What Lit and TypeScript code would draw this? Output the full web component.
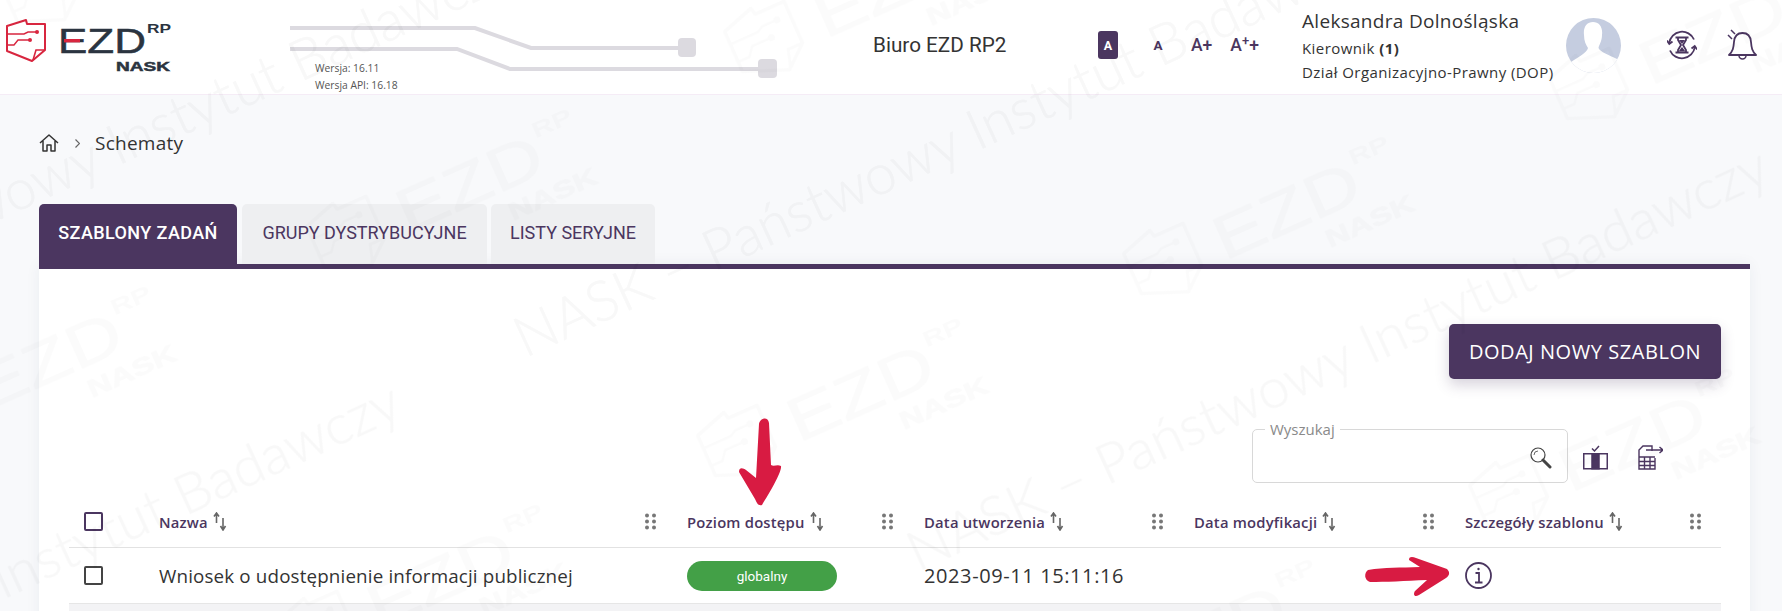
import { LitElement, html, css, svg } from "lit";
import { customElement } from "lit/decorators.js";

const logoIcon = (c: string) => svg`
  <path d="M7 26 L26 20 L27 24 L45 24 L45 50 L32 61 L7 51 Z" fill="none" stroke="${c}" stroke-width="2" stroke-linejoin="round"/>
  <path d="M45 50 L36 50 L33 60" fill="none" stroke="${c}" stroke-width="1.6"/>
  <path d="M7 34 L24 34 L28 32 L37 32 M7 45 L14 45 L18 40 L30 40" fill="none" stroke="${c}" stroke-width="1.4"/>
  <circle cx="37" cy="32" r="2" fill="${c}"/><circle cx="30" cy="40" r="2" fill="${c}"/>`;

const logo = (c: string, r: string) => svg`
  ${logoIcon(r)}
  <text x="58" y="53" font-family="Liberation Sans" font-size="35" textLength="88" lengthAdjust="spacingAndGlyphs" stroke="${c}" stroke-width=".5" fill="${c}">EZD</text>
  <rect x="64" y="39" width="16" height="3.4" fill="${r}"/>
  <text x="147" y="33" font-family="Liberation Sans" font-size="13" font-weight="700" textLength="24" lengthAdjust="spacingAndGlyphs" fill="${c}">RP</text>
  <text x="116" y="71" font-family="Liberation Sans" font-size="13.5" font-weight="700" stroke="${c}" stroke-width=".5" textLength="54" lengthAdjust="spacingAndGlyphs" fill="${c}">NASK</text>`;

const wmLogos: [number, number][] = [
  [-30, -55], [-144, 367], [248, 585], [277, 190], [668, 399], [695, -5], [1094, 217], [1020, 640], [1440, 449], [1520, 42],
];
const wmTexts: [number, number][] = [[525, 358], [918, 572], [-335, 373], [-450, 807]];

@customElement("app-root")
export class AppRoot extends LitElement {
  static styles = css`
    :host { display: block; position: relative; width: 1782px; height: 611px; overflow: hidden; background: #f8f9fb; font-family: "Open Sans", "Noto Sans", sans-serif; color: #333; }
    * { box-sizing: border-box; }
    .din { font-family: Roboto, "Liberation Sans", sans-serif; }
    header { display: flex; height: 95px; background: #fff; border-bottom: 1px solid #f5ecf6; }
    .logo { flex: none; width: 290px; height: 94px; display: block; }
    .lines { flex: none; position: relative; width: 583px; padding: 60px 0 0 25px; font-size: 10.3px; line-height: 17px; color: #555; }
    .lines svg { position: absolute; left: 0; top: 0; }
    .lines div { position: relative; }
    .biuro { flex: none; width: 225px; padding-top: 33px; font-size: 20.7px; line-height: 24px; color: #333; }
    .fonts { flex: none; width: 204px; display: flex; align-items: flex-start; padding-top: 31px; color: #4b3660; }
    .fa { display: flex; align-items: center; justify-content: center; height: 28px; font-weight: 500; }
    .fa.on { width: 20px; background: #4b3660; color: #fff; border-radius: 3px; font-size: 12.5px; font-weight: 700; }
    .fa.s { width: 20px; margin-left: 30px; font-size: 13.5px; font-weight: 700; }
    .fa.m { margin-left: 23px; font-size: 17.5px; }
    .fa.l { margin-left: 18px; font-size: 17.5px; }
    .fa sup { font-size: 13px; line-height: 1; align-self: flex-start; margin-top: 3px; }
    .user { flex: none; width: 264px; padding-top: 8px; }
    .uname { font-size: 19px; letter-spacing: .3px; line-height: 26px; color: #333; margin-bottom: 2px; }
    .urole { font-size: 15px; letter-spacing: .42px; line-height: 24px; color: #333; white-space: nowrap; }
    .urole b { font-weight: 700; }
    .avatar { flex: none; width: 55px; height: 55px; margin-top: 18px; display: block; }
    .ic1 { flex: none; margin: 30px 0 0 46px; display: block; }
    .ic2 { flex: none; margin: 28px 0 0 30px; display: block; }

    .crumbs { display: flex; align-items: center; height: 30px; margin: 33px 0 0 39px; }
    .crumbs .chev { margin: 0 15px 0 16px; display: block; }
    .crumbs span { font-size: 19px; letter-spacing: .25px; color: #333; }

    .tabs { display: flex; gap: 4px; height: 60px; margin: 46px 0 0 39px; }
    .tab { display: flex; align-items: center; justify-content: center; padding-bottom: 3px; font-size: 18px; color: #4b3660; background: #eeeff1; border-radius: 5px 5px 0 0; }
    .tab.on { background: #4b3660; color: #fff; width: 198px; margin-right: 1px; font-weight: 500; letter-spacing: .4px; }
    .tab.b { width: 245px; }
    .tab.c { width: 164px; }

    .panel { margin-left: 39px; width: 1711px; height: 400px; background: #fff; border-top: 5px solid #4b3660; padding: 55px 29px 0 30px; box-shadow: 0 0 14px rgba(40,50,80,.06); }
    .actions { display: flex; justify-content: flex-end; }
    .btn { width: 272px; height: 55px; display: flex; align-items: center; justify-content: center; border-radius: 5px; background: #4b3660; color: #fff; font-size: 20px; letter-spacing: .55px; box-shadow: 0 6px 14px rgba(75,54,96,.22); }
    .tools { display: flex; align-items: flex-start; margin-top: 50px; padding-right: 58px; justify-content: flex-end; }
    .search { width: 316px; height: 54px; border: 1px solid #d8d8d8; border-radius: 5px; margin-right: 15px; display: flex; justify-content: flex-end; padding: 17px 15px 0 0; }
    .fld { position: relative; }
    .fld .lab { position: absolute; left: 13px; top: -10px; padding: 0 5px; background: #fff; font-size: 15px; line-height: 20px; color: #8a8a8a; }
    .i1 { display: block; margin: 16px 30px 0 0; }
    .i2 { display: block; margin: 16px 0 0 0; }

    .row { display: grid; grid-template-columns: 90px 528px 237px 270px 271px 256px; }
    .thead { height: 65px; border-bottom: 1px solid #e2e2e2; }
    .tbody { height: 56px; border-bottom: 1px solid #e6e6e6; }
    .cell { display: flex; align-items: center; padding-right: 31px; }
    .cell.cb { padding-left: 15px; }
    .cell.last { padding-right: 20px; }
    .thead .cell { padding-top: 13px; }
    .box { width: 19px; height: 19px; border: 2px solid #4b3660; border-radius: 2px; }
    .box.d { border-color: #444; }
    .th { display: flex; align-items: center; flex: 1; font-size: 14.8px; letter-spacing: .2px; font-weight: 600; color: #4b3660; white-space: nowrap; }
    .th svg { display: block; margin-left: 5px; }
    .grip { flex: none; display: block; }
    .name { font-size: 18.8px; letter-spacing: .15px; color: #333; white-space: nowrap; }
    .pill { width: 150px; height: 30px; border-radius: 15px; background: #43a047; color: #fff; font-family: Roboto, sans-serif; font-size: 13.5px; display: flex; align-items: center; justify-content: center; }
    .date { font-size: 20px; letter-spacing: .6px; color: #333; white-space: nowrap; }
    .gray { height: 30px; background: #f3f3f5; }
    .overlay { position: absolute; left: 0; top: 0; pointer-events: none; }
  `;

  private sort() {
    return html`<svg width="14" height="19" viewBox="0 0 14 19"><path d="M3.5 11 V2 M1 4.500 L3.5 1 L6 4.500" fill="none" stroke="#666" stroke-width="1.6"/><path d="M10 6 V17 M7.5 14 L10 18 L12.5 14" fill="none" stroke="#666" stroke-width="1.6"/></svg>`;
  }
  private grip() {
    return html`<svg class="grip" width="11" height="17" viewBox="0 0 11 17" fill="#777"><circle cx="2" cy="2.5" r="2"/><circle cx="9" cy="2.5" r="2"/><circle cx="2" cy="8.5" r="2"/><circle cx="9" cy="8.5" r="2"/><circle cx="2" cy="14.5" r="2"/><circle cx="9" cy="14.5" r="2"/></svg>`;
  }
  private th(t: string, last = false) {
    return html`<div class="cell ${last ? "last" : ""}"><div class="th">${t}${this.sort()}</div>${this.grip()}</div>`;
  }

  render() {
    const P = "#4b3660";
    return html`
      <header>
        <svg class="logo" viewBox="0 0 290 94">${logo("#2b3440", "#d8263f")}</svg>
        <div class="lines">
          <svg width="490" height="94" viewBox="290 0 490 94">
            <path d="M290 28 H475 L531 48 H688 M290 49 H457 L510 69 H768" fill="none" stroke="#dcdae0" stroke-width="4"/>
            <rect x="678" y="38" width="18" height="19" rx="4" fill="#dcdae0"/>
            <rect x="758" y="59" width="19" height="19" rx="4" fill="#dcdae0"/>
          </svg>
          <div>Wersja: 16.11</div>
          <div>Wersja API: 16.18</div>
        </div>
        <div class="biuro din">Biuro EZD RP2</div>
        <div class="fonts din">
          <div class="fa on">A</div><div class="fa s">A</div><div class="fa m">A+</div><div class="fa l">A<sup>+</sup>+</div>
        </div>
        <div class="user">
          <div class="uname">Aleksandra Dolnośląska</div>
          <div class="urole">Kierownik <b>(1)</b></div>
          <div class="urole">Dział Organizacyjno-Prawny (DOP)</div>
        </div>
        <svg class="avatar" viewBox="0 0 55 55">
          <defs><clipPath id="av"><circle cx="27.5" cy="27.5" r="27.5"/></clipPath></defs>
          <circle cx="27.5" cy="27.5" r="27.5" fill="#c5cde0"/>
          <path clip-path="url(#av)" d="M27 4 C33 4 37 9 36 17 C36 23 33 27 32.500 30 C34 34 43 37 51 41 L58 60 H-3 L5 44 C12 39 21 35 22 30 C20 27 18 23 18 17 C17 9 21 4 27 4 Z" fill="#fff"/>
        </svg>
        <svg class="ic1" width="30" height="30" viewBox="0 0 30 30" fill="none" stroke="${P}" stroke-width="1.800">
          <path d="M2.200 13 A13 13 0 0 1 27 9.500 M27.800 17 A13 13 0 0 1 3 20.500"/>
          <path d="M0 10.500 L2.300 14 L5.500 11.500 M30 19.500 L27.700 16 L24.500 18.500"/>
          <path d="M8.500 7.500 H21.500 M8.500 22.500 H21.500" stroke-width="2"/>
          <path d="M11 8 V10 L14 15 L11 20 V22 M19 8 V10 L16 15 L19 20 V22"/>
          <path d="M11.500 21.500 L15 17 L18.500 21.500 Z M12 10 H18 L15 14 Z" fill="${P}" stroke="none"/>
        </svg>
        <svg class="ic2" width="30" height="33" viewBox="0 0 30 33" fill="none" stroke="${P}" stroke-width="1.800" stroke-linejoin="round">
          <path d="M2 27 C6 23 6.500 20 7 14 C7.500 8 10.500 5 15.500 5 C20.500 5 23.500 8 24 14 C24.500 20 25 23 29 27 Z"/>
          <path d="M12 27.500 A3.500 3.500 0 0 0 19 27.500 M1 7 L5 11 M4 2 L8 6" stroke-width="1.500"/>
        </svg>
      </header>

      <div class="crumbs">
        <svg width="20" height="18" viewBox="0 0 20 18" fill="none" stroke="#333" stroke-width="1.500" stroke-linejoin="round"><path d="M1 9 L10 1 L19 9 M4 7 V17 H8 V11 H12 V17 H16 V7"/></svg>
        <svg class="chev" width="5" height="9" viewBox="0 0 5 9" fill="none" stroke="#666" stroke-width="1.200"><path d="M.5 .5 L4.500 4.500 L.5 8.500"/></svg>
        <span>Schematy</span>
      </div>

      <div class="tabs din">
        <div class="tab on">SZABLONY ZADAŃ</div>
        <div class="tab b">GRUPY DYSTRYBUCYJNE</div>
        <div class="tab c">LISTY SERYJNE</div>
      </div>

      <div class="panel">
        <div class="actions"><div class="btn">DODAJ NOWY SZABLON</div></div>
        <div class="tools">
          <div class="fld">
            <div class="lab">Wyszukaj</div>
            <div class="search">
              <svg width="22" height="22" viewBox="0 0 22 22" fill="none" stroke="#444" stroke-width="1.200"><circle cx="8" cy="8" r="7"/><path d="M4 8 A4 4 0 0 1 8 4" stroke-width=".8"/><path d="M13 13 L20 20" stroke-width="3" stroke-linecap="round"/></svg>
            </div>
          </div>
          <svg class="i1" width="25" height="25" viewBox="0 0 25 25" fill="none" stroke="${P}" stroke-width="1.500">
            <rect x=".75" y="8.750" width="23.500" height="15"/>
            <rect x="9" y="8.750" width="7" height="15" fill="${P}"/>
            <path d="M9 3.500 L11.500 6 L16 1"/>
          </svg>
          <svg class="i2" width="25" height="25" viewBox="0 0 25 25" fill="none" stroke="${P}" stroke-width="1.400">
            <path d="M14 6 V1 H5 L1 5 V24 H17 V13"/>
            <path d="M8 5 H25 M21.500 2 L25 5 L21.500 8" />
            <path d="M1 12 H17 M1 16.500 H17 M1 20.500 H17 M6.500 12 V24 M12 12 V24"/>
          </svg>
        </div>
        <div class="row thead">
          <div class="cell cb"><div class="box"></div></div>
          ${this.th("Nazwa")}${this.th("Poziom dostępu")}${this.th("Data utworzenia")}${this.th("Data modyfikacji")}${this.th("Szczegóły szablonu", true)}
        </div>
        <div class="row tbody">
          <div class="cell cb"><div class="box d"></div></div>
          <div class="cell"><span class="name">Wniosek o udostępnienie informacji publicznej</span></div>
          <div class="cell"><div class="pill">globalny</div></div>
          <div class="cell"><span class="date">2023-09-11 15:11:16</span></div>
          <div class="cell"></div>
          <div class="cell">
            <svg width="27" height="29" viewBox="0 0 27 29" fill="none" stroke="${P}" stroke-width="1.800"><circle cx="13.500" cy="14.500" r="12.500"/><path d="M10.500 12 H14 V21 M10 21.500 H17.500"/><circle cx="13.500" cy="8" r="1.200" fill="${P}" stroke="none"/></svg>
          </div>
        </div>
        <div class="gray"></div>
      </div>

      <svg class="overlay" width="1782" height="611" viewBox="0 0 1782 611">
        <g opacity=".018">
          ${wmLogos.map(([x, y]) => svg`<g transform="translate(${x} ${y}) rotate(-24) scale(1.75)">${logo("#000", "#000")}</g>`)}
        </g>
        <g opacity=".028">
          ${wmTexts.map(([x, y]) => svg`<text transform="translate(${x} ${y}) rotate(-24.6)" font-family="Lato" font-weight="300" font-size="56" textLength="940" lengthAdjust="spacing" fill="#000" stroke="#000" stroke-width=".6">NASK – Państwowy Instytut Badawczy</text>`)}
        </g>
        <path d="M759 424 C760 418 768 416 769 423 L771 465 C774 467 777 464 781 466 C782 472 770 492 762 505 C758 506 757 503 755 499 L739 472 C739 467 743 468 746 470 L756 478 Z" fill="#d81b42"/>
        <path d="M1368 570 C1385 567 1400 568 1420 567 L1409 560 C1409 556 1413 557 1416 558 L1447 569 C1450 572 1450 575 1446 578 L1419 595 C1414 598 1413 594 1415 591 L1427 580 C1405 581 1385 582 1370 582 C1364 580 1364 573 1368 570 Z" fill="#d81b42"/>
      </svg>
    `;
  }
}
